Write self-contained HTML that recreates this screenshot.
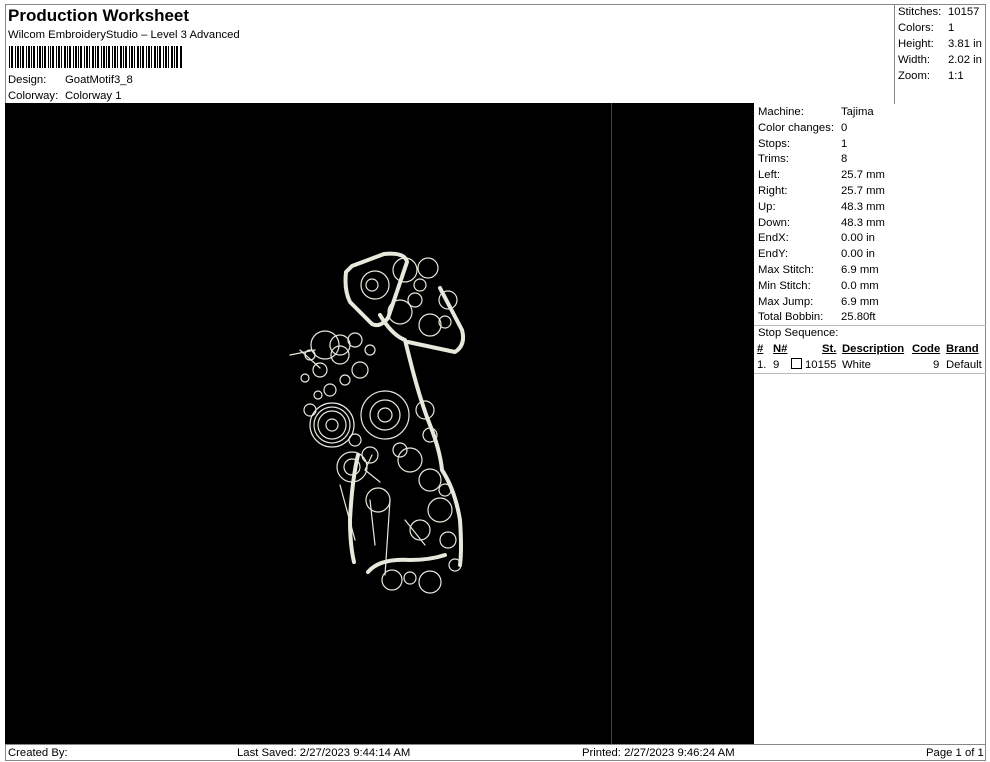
<!DOCTYPE html>
<html><head><meta charset="utf-8"><style>
body{margin:0;width:990px;height:762px;background:#fff;position:relative;overflow:hidden;font-family:"Liberation Sans",Arial,sans-serif;color:#000}
.a{position:absolute;white-space:nowrap;font-size:11.3px;line-height:14px}
.b{position:absolute;background:#888}
</style></head><body>
<div class="b" style="left:5px;top:4px;width:981px;height:1px"></div>
<div class="b" style="left:5px;top:4px;width:1px;height:757px"></div>
<div class="b" style="left:985px;top:4px;width:1px;height:757px"></div>
<div class="b" style="left:5px;top:760px;width:981px;height:1px"></div>
<div class="b" style="left:894px;top:4px;width:1px;height:100px"></div>
<div class="b" style="left:5px;top:744px;width:981px;height:1px"></div>
<div class="b" style="left:754px;top:325px;width:232px;height:1px;background:#bbb"></div>
<div class="b" style="left:754px;top:373px;width:232px;height:1px;background:#bbb"></div>

<div class="a" style="left:8px;top:6px;font-size:17px;font-weight:bold;line-height:20px">Production Worksheet</div>
<div class="a" style="left:8px;top:28px">Wilcom EmbroideryStudio – Level 3 Advanced</div>
<svg style="position:absolute;left:9px;top:46px" width="174" height="22">
<g fill="#000">
<rect x="0" width="1" height="22"/><rect x="2" width="2" height="22"/><rect x="6" width="1" height="22"/><rect x="8" width="2" height="22"/><rect x="11" width="1" height="22"/><rect x="13" width="2" height="22"/><rect x="17" width="1" height="22"/><rect x="19" width="2" height="22"/><rect x="22" width="1" height="22"/><rect x="24" width="2" height="22"/><rect x="28" width="1" height="22"/><rect x="30" width="2" height="22"/><rect x="33" width="1" height="22"/><rect x="35" width="2" height="22"/><rect x="39" width="1" height="22"/><rect x="41" width="1" height="22"/><rect x="43" width="2" height="22"/><rect x="47" width="1" height="22"/><rect x="49" width="2" height="22"/><rect x="52" width="1" height="22"/><rect x="55" width="2" height="22"/><rect x="58" width="1" height="22"/><rect x="60" width="2" height="22"/><rect x="64" width="1" height="22"/><rect x="66" width="2" height="22"/><rect x="69" width="1" height="22"/><rect x="71" width="2" height="22"/><rect x="75" width="1" height="22"/><rect x="77" width="2" height="22"/><rect x="80" width="1" height="22"/><rect x="83" width="2" height="22"/><rect x="86" width="1" height="22"/><rect x="88" width="2" height="22"/><rect x="92" width="1" height="22"/><rect x="94" width="2" height="22"/><rect x="97" width="1" height="22"/><rect x="99" width="2" height="22"/><rect x="103" width="1" height="22"/><rect x="105" width="2" height="22"/><rect x="108" width="1" height="22"/><rect x="111" width="2" height="22"/><rect x="114" width="1" height="22"/><rect x="116" width="2" height="22"/><rect x="120" width="1" height="22"/><rect x="122" width="2" height="22"/><rect x="125" width="1" height="22"/><rect x="128" width="2" height="22"/><rect x="131" width="1" height="22"/><rect x="133" width="2" height="22"/><rect x="137" width="1" height="22"/><rect x="139" width="2" height="22"/><rect x="142" width="1" height="22"/><rect x="145" width="2" height="22"/><rect x="148" width="1" height="22"/><rect x="150" width="2" height="22"/><rect x="154" width="1" height="22"/><rect x="156" width="2" height="22"/><rect x="159" width="1" height="22"/><rect x="162" width="2" height="22"/><rect x="165" width="1" height="22"/><rect x="167" width="2" height="22"/><rect x="171" width="2" height="22"/>
</g></svg>
<div class="a" style="left:8px;top:73px">Design:</div><div class="a" style="left:65px;top:73px">GoatMotif3_8</div>
<div class="a" style="left:8px;top:89px">Colorway:</div><div class="a" style="left:65px;top:89px">Colorway 1</div>

<div class="a" style="left:898px;top:5px">Stitches:</div><div class="a" style="left:948px;top:5px">10157</div>
<div class="a" style="left:898px;top:21px">Colors:</div><div class="a" style="left:948px;top:21px">1</div>
<div class="a" style="left:898px;top:37px">Height:</div><div class="a" style="left:948px;top:37px">3.81 in</div>
<div class="a" style="left:898px;top:53px">Width:</div><div class="a" style="left:948px;top:53px">2.02 in</div>
<div class="a" style="left:898px;top:69px">Zoom:</div><div class="a" style="left:948px;top:69px">1:1</div>

<div style="position:absolute;left:5px;top:103px;width:749px;height:641px;background:#000"></div>
<div style="position:absolute;left:611px;top:103px;width:1px;height:641px;background:#444"></div>

<svg style="position:absolute;left:0;top:0" width="754" height="744" fill="none" stroke="#e8e8dc" stroke-linecap="round" stroke-linejoin="round">
<g stroke-width="4">
<path d="M352 266 L384 254 Q405 252 407 262 L388 318 Q380 328 372 324 L350 302 Q344 290 346 272 Z"/>
<path d="M380 315 Q392 335 405 340 L410 360 Q420 400 430 425 Q440 450 442 470 Q455 490 460 520 Q462 550 460 565"/>
<path d="M408 342 L455 352 Q466 345 462 330 L440 288"/>
<path d="M358 455 Q352 480 350 520 Q350 545 354 562"/>
<path d="M368 572 Q380 558 410 560 Q430 560 445 555"/>
</g>
<g stroke-width="1.2">
<circle cx="375" cy="285" r="14"/><circle cx="372" cy="285" r="6"/>
<circle cx="405" cy="270" r="12"/><circle cx="428" cy="268" r="10"/><circle cx="420" cy="285" r="6"/>
<circle cx="400" cy="312" r="12"/><circle cx="448" cy="300" r="9"/><circle cx="430" cy="325" r="11"/><circle cx="415" cy="300" r="7"/><circle cx="445" cy="322" r="6"/>
<circle cx="385" cy="415" r="24"/><circle cx="385" cy="415" r="15"/><circle cx="385" cy="415" r="7"/>
<circle cx="332" cy="425" r="22"/><circle cx="332" cy="425" r="14"/><circle cx="332" cy="425" r="6"/><circle cx="332" cy="425" r="18"/>
<circle cx="340" cy="355" r="9"/><circle cx="320" cy="370" r="7"/><circle cx="310" cy="355" r="5"/><circle cx="355" cy="340" r="7"/><circle cx="360" cy="370" r="8"/><circle cx="330" cy="390" r="6"/><circle cx="345" cy="380" r="5"/><circle cx="370" cy="350" r="5"/><circle cx="305" cy="378" r="4"/><circle cx="318" cy="395" r="4"/>
<circle cx="325" cy="345" r="14"/><circle cx="340" cy="345" r="10"/>
<circle cx="352" cy="467" r="15"/><circle cx="352" cy="467" r="8"/>
<circle cx="378" cy="500" r="12"/><circle cx="410" cy="460" r="12"/><circle cx="430" cy="480" r="11"/><circle cx="440" cy="510" r="12"/><circle cx="420" cy="530" r="10"/><circle cx="400" cy="450" r="7"/><circle cx="448" cy="540" r="8"/><circle cx="445" cy="490" r="6"/>
<circle cx="392" cy="580" r="10"/><circle cx="430" cy="582" r="11"/><circle cx="455" cy="565" r="6"/><circle cx="410" cy="578" r="6"/>
<circle cx="425" cy="410" r="9"/><circle cx="430" cy="435" r="7"/><circle cx="310" cy="410" r="6"/>
<circle cx="370" cy="455" r="8"/><circle cx="355" cy="440" r="6"/>
<path d="M290 355 L315 350 M370 500 L375 545 M390 500 L385 575 M340 485 L355 540 M320 368 L300 350 M372 455 L365 470 L380 482 M405 520 L425 545"/>
</g>
</svg>

<div class="a" style="left:758px;top:105px">Machine:</div><div class="a" style="left:841px;top:105px">Tajima</div>
<div class="a" style="left:758px;top:121px">Color changes:</div><div class="a" style="left:841px;top:121px">0</div>
<div class="a" style="left:758px;top:137px">Stops:</div><div class="a" style="left:841px;top:137px">1</div>
<div class="a" style="left:758px;top:152px">Trims:</div><div class="a" style="left:841px;top:152px">8</div>
<div class="a" style="left:758px;top:168px">Left:</div><div class="a" style="left:841px;top:168px">25.7 mm</div>
<div class="a" style="left:758px;top:184px">Right:</div><div class="a" style="left:841px;top:184px">25.7 mm</div>
<div class="a" style="left:758px;top:200px">Up:</div><div class="a" style="left:841px;top:200px">48.3 mm</div>
<div class="a" style="left:758px;top:216px">Down:</div><div class="a" style="left:841px;top:216px">48.3 mm</div>
<div class="a" style="left:758px;top:231px">EndX:</div><div class="a" style="left:841px;top:231px">0.00 in</div>
<div class="a" style="left:758px;top:247px">EndY:</div><div class="a" style="left:841px;top:247px">0.00 in</div>
<div class="a" style="left:758px;top:263px">Max Stitch:</div><div class="a" style="left:841px;top:263px">6.9 mm</div>
<div class="a" style="left:758px;top:279px">Min Stitch:</div><div class="a" style="left:841px;top:279px">0.0 mm</div>
<div class="a" style="left:758px;top:295px">Max Jump:</div><div class="a" style="left:841px;top:295px">6.9 mm</div>
<div class="a" style="left:758px;top:310px">Total Bobbin:</div><div class="a" style="left:841px;top:310px">25.80ft</div>
<div class="a" style="left:758px;top:326px">Stop Sequence:</div>
<div class="a" style="left:757px;top:342px;font-weight:bold;text-decoration:underline">#</div>
<div class="a" style="left:773px;top:342px;font-weight:bold;text-decoration:underline">N#</div>
<div class="a" style="left:822px;top:342px;font-weight:bold;text-decoration:underline">St.</div>
<div class="a" style="left:842px;top:342px;font-weight:bold;text-decoration:underline">Description</div>
<div class="a" style="left:912px;top:342px;font-weight:bold;text-decoration:underline">Code</div>
<div class="a" style="left:946px;top:342px;font-weight:bold;text-decoration:underline">Brand</div>
<div class="a" style="left:757px;top:358px">1.</div><div class="a" style="left:773px;top:358px">9</div>
<div style="position:absolute;left:791px;top:358px;width:9px;height:9px;border:1px solid #000"></div>
<div class="a" style="left:805px;top:358px">10155</div><div class="a" style="left:842px;top:358px">White</div>
<div class="a" style="left:933px;top:358px">9</div><div class="a" style="left:946px;top:358px">Default</div>

<div class="a" style="left:8px;top:746px">Created By:</div>
<div class="a" style="left:237px;top:746px">Last Saved: 2/27/2023 9:44:14 AM</div>
<div class="a" style="left:582px;top:746px">Printed: 2/27/2023 9:46:24 AM</div>
<div class="a" style="left:926px;top:746px">Page 1 of 1</div>
</body></html>
